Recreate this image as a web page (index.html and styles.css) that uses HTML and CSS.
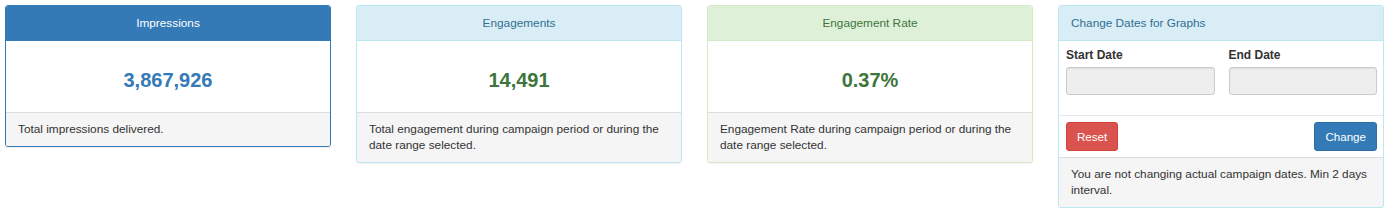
FILE: index.html
```html
<!DOCTYPE html>
<html lang="en">
<head>
  <meta charset="UTF-8">
  <title>Campaign Stats</title>
  <link rel="stylesheet" href="styles.css">
</head>
<body>
  <div class="stats">

    <!-- Impressions -->
    <div class="panel panel-primary">
      <div class="panel-heading">Impressions</div>
      <div class="panel-body">
        <h3 class="stat stat-blue">3,867,926</h3>
      </div>
      <div class="panel-footer">Total impressions delivered.</div>
    </div>

    <!-- Engagements -->
    <div class="panel panel-info">
      <div class="panel-heading">Engagements</div>
      <div class="panel-body">
        <h3 class="stat stat-green">14,491</h3>
      </div>
      <div class="panel-footer">Total engagement during campaign period or during the date range selected.</div>
    </div>

    <!-- Engagement Rate -->
    <div class="panel panel-success">
      <div class="panel-heading">Engagement Rate</div>
      <div class="panel-body">
        <h3 class="stat stat-green">0.37%</h3>
      </div>
      <div class="panel-footer">Engagement Rate during campaign period or during the date range selected.</div>
    </div>

    <!-- Datumsauswahl -->
    <div class="panel panel-info">
      <div class="panel-heading heading-left">Change Dates for Graphs</div>
      <div class="panel-body date-body">
        <div class="date-row">
          <div class="field">
            <label for="start-date">Start Date</label>
            <input id="start-date" type="text" class="date-input" readonly>
          </div>
          <div class="field">
            <label for="end-date">End Date</label>
            <input id="end-date" type="text" class="date-input" readonly>
          </div>
        </div>
      </div>
      <div class="panel-actions">
        <button class="btn btn-danger">Reset</button>
        <button class="btn btn-primary">Change</button>
      </div>
      <div class="panel-footer">You are not changing actual campaign dates. Min 2 days interval.</div>
    </div>

  </div>
</body>
</html>
```

FILE: styles.css
```css
body {
  margin: 0;
  background-color: #fff;
  font-family: "Liberation Sans", Arial, sans-serif;
  font-size: 11.8px;
  line-height: 16px;
  color: #333;
}

.stats {
  display: grid;
  grid-template-columns: repeat(4, 1fr);
  gap: 25px;
  align-items: start;
  padding: 5px 16px 0 5px;
}

.panel {
  background-color: #fff;
  border: 1px solid #ddd;
  border-radius: 3px;
  overflow: hidden;
  box-shadow: 0 1px 1px rgba(0, 0, 0, 0.05);
}

.panel-heading {
  padding: 9px 12px;
  text-align: center;
  border-bottom: 1px solid transparent;
}

.heading-left {
  text-align: left;
}

.panel-primary {
  border-color: #337ab7;
}

.panel-primary .panel-heading {
  background-color: #337ab7;
  border-color: #337ab7;
  color: #fff;
}

.panel-info {
  border-color: #bce8f1;
}

.panel-info .panel-heading {
  background-color: #d9edf7;
  border-color: #bce8f1;
  color: #31708f;
}

.panel-success {
  border-color: #d6e9c6;
}

.panel-success .panel-heading {
  background-color: #dff0d8;
  border-color: #d6e9c6;
  color: #3c763d;
}

.panel-body {
  padding: 12px;
}

.stat {
  margin: 16px 0 9px;
  font-size: 20px;
  line-height: 22px;
  font-weight: bold;
  text-align: center;
}

.stat-blue {
  color: #337ab7;
}

.stat-green {
  color: #3c763d;
}

.panel-footer {
  padding: 8px 12px 9px;
  background-color: #f5f5f5;
  border-top: 1px solid #ddd;
}

/* Datumsauswahl */
.date-body {
  padding: 6px 6px 20px 7px;
}

.date-row {
  display: grid;
  grid-template-columns: 1fr 1fr;
  gap: 14px;
}

.field label {
  display: block;
  margin-bottom: 4px;
  font-size: 12px;
  font-weight: bold;
  color: #333;
}

.date-input {
  display: block;
  box-sizing: border-box;
  width: 100%;
  height: 28px;
  margin: 0;
  padding: 4px 8px;
  background-color: #eee;
  border: 1px solid #ccc;
  border-radius: 3px;
  box-shadow: inset 0 1px 1px rgba(0, 0, 0, 0.075);
}

.panel-actions {
  display: flex;
  justify-content: space-between;
  padding: 6px 6px 6px 7px;
  border-top: 1px solid #e2ecef;
}

.btn {
  padding: 5px 10px;
  font-family: "Liberation Sans", Arial, sans-serif;
  font-size: 11.6px;
  line-height: 17px;
  color: #fff;
  border: 1px solid transparent;
  border-radius: 3px;
}

.btn-danger {
  background-color: #d9534f;
  border-color: #d43f3a;
}

.btn-primary {
  background-color: #337ab7;
  border-color: #2e6da4;
}
```
